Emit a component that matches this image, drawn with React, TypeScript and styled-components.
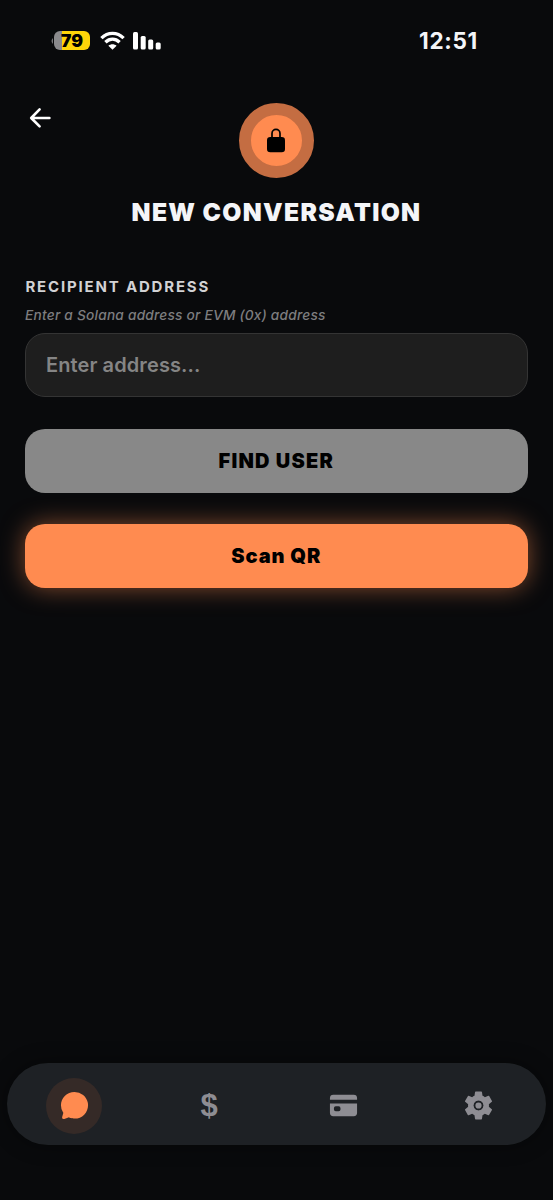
import React from "react";
import styled, { createGlobalStyle } from "styled-components";
import { IoCard, IoChatbubble, IoSettingsSharp } from "react-icons/io5";

const GlobalStyle = createGlobalStyle`
  * { box-sizing: border-box; }
  body { margin: 0; background: #090a0c; }
`;

const Screen = styled.div`
  width: 553px;
  height: 1200px;
  display: flex;
  flex-direction: column;
  overflow: hidden;
  background: #090a0c;
  color: #f4f5f8;
  font-family: Inter, "Liberation Sans", sans-serif;
`;

const StatusBar = styled.header`
  height: 82px;
  padding: 0 75px 0 51px;
  display: flex;
  align-items: center;
  justify-content: space-between;
`;

const StatusIcons = styled.div`
  display: flex;
  align-items: center;
  padding-bottom: 1px;
`;

const Battery = styled.div`
  width: 36px;
  height: 19px;
  margin: 0 10px 0 1px;
  border-radius: 6px;
  background: linear-gradient(90deg, #8a8a8d 0 8px, #fed509 8px);
  color: #000;
  font-size: 17.5px;
  font-weight: 900;
  line-height: 19px;
  text-align: center;
`;

const SignalBox = styled.div`
  margin-left: 8px;
  display: flex;
`;

const Clock = styled.time`
  font-size: 22.5px;
  font-weight: 700;
  line-height: 26px;
  letter-spacing: 0.7px;
`;

const Header = styled.div`
  height: 151px;
  padding: 21px 25px 0;
  display: grid;
  grid-template-columns: 76px 1fr 76px;
  justify-items: center;
  align-content: start;
`;

const BackButton = styled.button`
  justify-self: start;
  width: 30px;
  height: 30px;
  padding: 0;
  border: 0;
  background: none;
  color: #fff;
  display: flex;
  align-items: center;
  justify-content: center;
`;

const Badge = styled.div`
  width: 75px;
  height: 75px;
  border: 12.5px solid #c46d42;
  border-radius: 50%;
  background: #ff8b50;
  color: #000;
  display: flex;
  align-items: center;
  justify-content: center;
  padding-right: 1px;
`;

const Title = styled.h1`
  grid-column: 1 / -1;
  margin: 19px 0 0;
  font-size: 24.7px;
  font-weight: 900;
  line-height: 31px;
  letter-spacing: 1.3px;
  white-space: nowrap;
`;

const Form = styled.main`
  flex: 1;
  padding: 44px 25.5px 0 25px;
  display: flex;
  flex-direction: column;
`;

const Label = styled.label`
  padding-left: 0.4px;
  font-size: 15px;
  font-weight: 700;
  line-height: 20px;
  letter-spacing: 1.82px;
  color: #d2d2d4;
`;

const Hint = styled.p`
  margin: 9px 0 9px;
  font-size: 13.7px;
  font-style: italic;
  font-weight: 500;
  line-height: 18px;
  letter-spacing: 0.23px;
  color: #7d7d7f;
`;

const AddressInput = styled.input`
  width: 100%;
  height: 64px;
  padding: 0 20px;
  border: 1px solid #343434;
  border-radius: 20px;
  outline: none;
  background: #1e1e1e;
  color: #fff;
  font: 600 20px Inter, "Liberation Sans", sans-serif;
  letter-spacing: 0.1px;
  &::placeholder { color: #858585; opacity: 1; }
`;

const ActionButton = styled.button<{ $primary?: boolean }>`
  width: 100%;
  height: 64px;
  flex: none;
  margin-top: ${({ $primary }) => ($primary ? 31.4 : 32)}px;
  padding: 0;
  border: 0;
  border-radius: 20px;
  background: ${({ $primary }) => ($primary ? "#ff8b50" : "#888")};
  box-shadow: ${({ $primary }) => ($primary ? "0 0 25px rgba(255, 139, 80, 0.5)" : "none")};
  color: #000;
  font: 900 20px Inter, "Liberation Sans", sans-serif;
  letter-spacing: ${({ $primary }) => ($primary ? 0.9 : 1.2)}px;
`;

const TabBar = styled.nav`
  height: 82px;
  margin: 0 7px 55.5px;
  display: grid;
  grid-template-columns: repeat(4, 1fr);
  place-items: center;
  border-radius: 41px;
  background: #1e2125;
  box-shadow: 0 0 20px rgba(0, 0, 0, 0.4);
  padding-top: 4px;
`;

const Tab = styled.button<{ $active?: boolean }>`
  width: 56px;
  height: 56px;
  padding: 0;
  border: 0;
  border-radius: 50%;
  display: flex;
  align-items: center;
  justify-content: center;
  background: ${({ $active }) => ($active ? "#352a27" : "transparent")};
  color: ${({ $active }) => ($active ? "#ff8b50" : "#8e8d93")};
`;

const Dollar = styled.span`
  font: 700 31px/36px "Liberation Sans", sans-serif;
  padding-top: 1px;
`;

function BackIcon() {
  return (
    <svg width="30" height="30" viewBox="0 0 30 30" fill="none" stroke="#fff" strokeWidth="2.6" strokeLinecap="round" strokeLinejoin="round">
      <path d="M14.6 6.4 6.2 15l8.4 8.4M6.8 15h17.6" />
    </svg>
  );
}

function LockIcon() {
  return (
    <svg width="18" height="25" viewBox="0 0 18 25">
      <path d="M5 10V5.4a4 4 0 0 1 8 0V10" fill="none" stroke="#000" strokeWidth="1.7" />
      <rect x="0" y="9" width="18" height="15.2" rx="3.3" />
    </svg>
  );
}

function WifiIcon() {
  return (
    <svg width="25" height="19" viewBox="0 0 25 19" fill="none" stroke="#fff" strokeWidth="3.4">
      <path d="M1.4 7.1C7.8 .8 17.2.8 23.6 7.1" />
      <path d="M5.4 11.3c4.3-4 9.9-4 14.2 0" />
      <path d="m8.4 14.7 4.1 4.1 4.1-4.1c-2.4-2-5.8-2-8.2 0Z" fill="#fff" stroke="none" />
    </svg>
  );
}

function SignalIcon() {
  return (
    <svg width="28" height="18" viewBox="0 0 28 18" fill="#fff">
      <rect x="0" y="0" width="5" height="17.5" rx="1.5" />
      <rect x="7.7" y="4" width="5" height="13.5" rx="1.5" />
      <rect x="15.2" y="7.5" width="5" height="10" rx="1.5" />
      <rect x="22.7" y="10.5" width="5" height="7" rx="1.5" />
    </svg>
  );
}

function GearIcon() {
  return (
    <svg width="31" height="31" viewBox="0 0 31 31">
      <IoSettingsSharp size={31} />
      <circle cx="15.5" cy="15.5" r="3.9" fill="#8e8d93" stroke="#1e2125" strokeWidth="1.6" />
    </svg>
  );
}

export default function App() {
  return (
    <Screen>
      <GlobalStyle />
      <StatusBar>
        <StatusIcons>
          <svg width="2" height="6" viewBox="0 0 2 6"><path d="M2 0Q-1 3 2 6Z" fill="#77777a" /></svg>
          <Battery>79</Battery>
          <WifiIcon />
          <SignalBox><SignalIcon /></SignalBox>
        </StatusIcons>
        <Clock>12:51</Clock>
      </StatusBar>
      <Header>
        <BackButton aria-label="Back"><BackIcon /></BackButton>
        <Badge><LockIcon /></Badge>
        <Title>NEW CONVERSATION</Title>
      </Header>
      <Form>
        <Label htmlFor="address">RECIPIENT ADDRESS</Label>
        <Hint>Enter a Solana address or EVM (0x) address</Hint>
        <AddressInput id="address" placeholder="Enter address..." />
        <ActionButton>FIND USER</ActionButton>
        <ActionButton $primary>Scan QR</ActionButton>
      </Form>
      <TabBar>
        <Tab $active aria-label="Chats"><IoChatbubble size={31} /></Tab>
        <Tab aria-label="Payments"><Dollar>$</Dollar></Tab>
        <Tab aria-label="Cards"><IoCard size={31} /></Tab>
        <Tab aria-label="Settings"><GearIcon /></Tab>
      </TabBar>
    </Screen>
  );
}
